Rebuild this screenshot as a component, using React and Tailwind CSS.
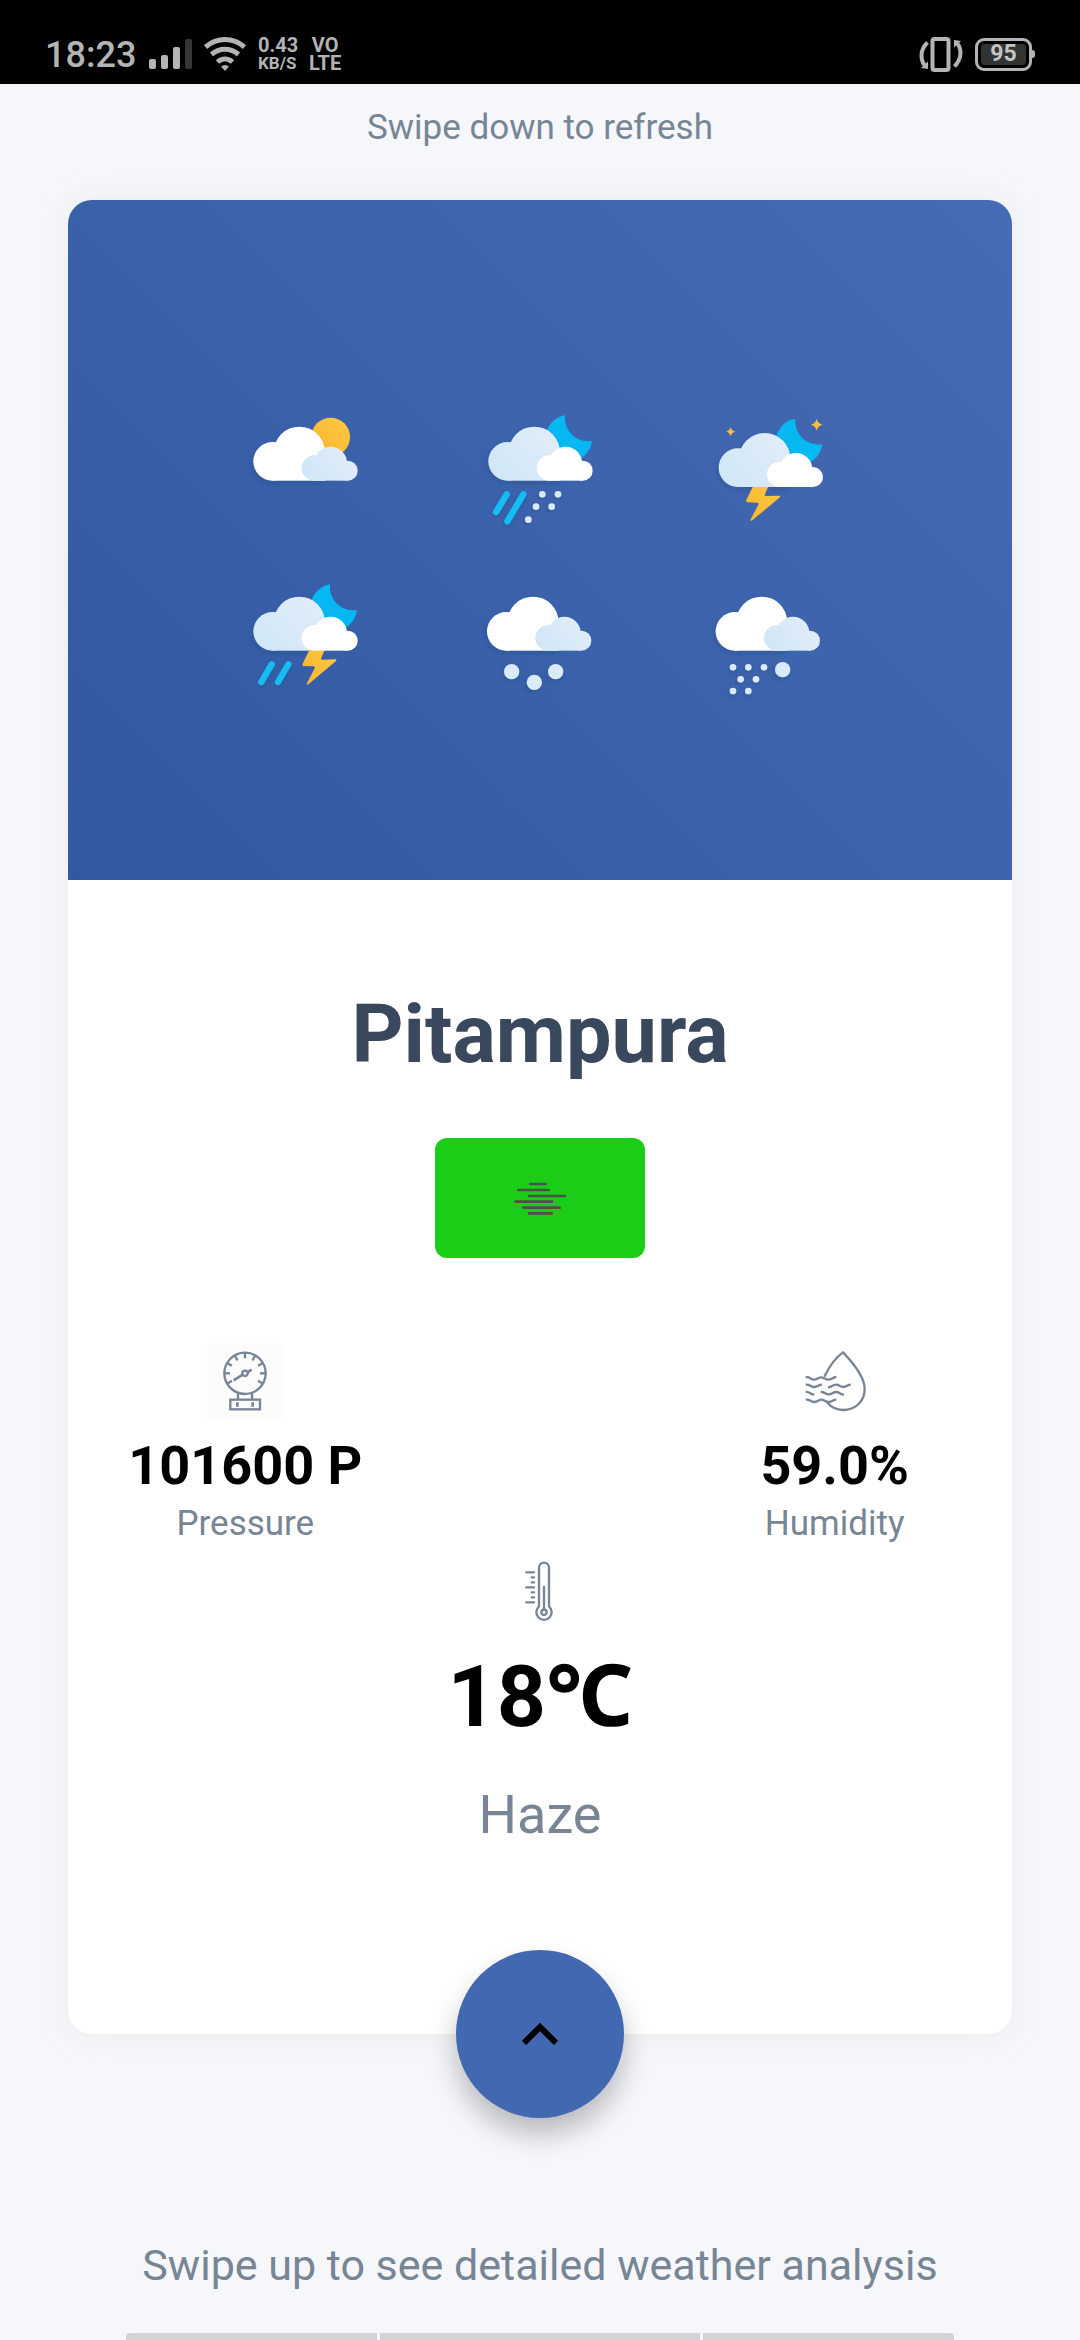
const INK = "#b4b4b4";

function SignalIcon() {
  return (
    <svg className="h-8 w-11" viewBox="0 0 44 32" aria-hidden="true">
      <rect x="0" y="21" width="7" height="10" rx="2" fill={INK} />
      <rect x="12" y="17" width="7" height="14" rx="2" fill={INK} />
      <rect x="24" y="9" width="7" height="22" rx="2" fill={INK} />
      <rect x="36" y="1" width="7" height="30" rx="2" fill="#363636" />
    </svg>
  );
}

function WifiIcon() {
  return (
    <svg className="h-[34px] w-[42px]" viewBox="0 0 42 34" fill="none" stroke={INK} strokeWidth="5" aria-hidden="true">
      <path d="M1.500 10C13 0 29 0 40.500 10" />
      <path d="M7.500 17.500C15.500 10.500 26.500 10.500 34.500 17.500" />
      <path d="M13.500 25C18 21 24 21 28.500 25" />
      <path d="M17 29.500Q21 26.500 25 29.500L21 34Z" fill={INK} stroke="none" />
    </svg>
  );
}

function VibrateIcon() {
  return (
    <svg className="h-9 w-11" viewBox="0 0 44 36" fill="none" stroke={INK} strokeWidth="4" aria-hidden="true">
      <rect x="13.500" y="3" width="16" height="31" rx="2" />
      <path d="M8.500 6.500C1 13.500 1 23.500 6 30" />
      <path d="M35.500 30.500C43 22.500 43 13.500 38 7" />
      <path d="M2 32L9 33V25.500Z" fill={INK} stroke="none" />
      <path d="M42 5L35 4V11.500Z" fill={INK} stroke="none" />
    </svg>
  );
}

function StatusBar() {
  return (
    <header className="flex h-[84px] items-end justify-between bg-black px-[45px] pb-3 text-[#b4b4b4]">
      <div className="flex items-center">
        <span className="h-9 w-[104px] text-[36px] leading-[38px] font-medium">18:23</span>
        <SignalIcon />
        <span className="ml-[11px] flex">
          <WifiIcon />
        </span>
        <div className="ml-3 flex w-[51px] flex-col font-bold">
          <span className="text-[20px] leading-[18px]">0.43</span>
          <span className="text-[17px] leading-[18px]">KB/S</span>
        </div>
        <div className="flex flex-col items-center text-[20px] leading-[18px] font-bold">
          <span>VO</span>
          <span>LTE</span>
        </div>
      </div>
      <div className="flex items-center gap-3">
        <VibrateIcon />
        <div className="flex items-center">
          <div className="flex h-[33px] w-[57px] rounded-[9px] border-[3px] border-[#b4b4b4] p-[3px]">
            <span className="flex flex-1 items-center justify-center rounded bg-[#333333] text-[23px] leading-[22px] font-bold text-[#c4c4c4]">
              95
            </span>
          </div>
          <span className="h-2 w-[3px] rounded-r bg-[#b4b4b4]" />
        </div>
      </div>
    </header>
  );
}

/* Cloud pair: origin is the lower left corner of the large cloud. */
function Clouds({ big, small }) {
  return (
    <>
      <g fill={big} filter="url(#soft)">
        <circle cx="58" cy="-58" r="58" />
        <circle cx="138" cy="-85" r="77" />
        <rect x="58" y="-90" width="157" height="90" />
      </g>
      <g fill={small}>
        <circle cx="183" cy="-38" r="38" />
        <circle cx="232" cy="-53" r="49" />
        <circle cx="283" cy="-30" r="30" />
        <rect x="183" y="-50" width="100" height="50" />
      </g>
    </>
  );
}

const Moon = ({ y = 0 }) => (
  <path transform={`translate(0 ${y})`} d="M230 -196A70 70 0 1 0 311 -119A70 70 0 0 1 230 -196Z" fill="#05b8f2" />
);

const Bolt = ({ x = 0 }) => (
  <path
    transform={`translate(${x} 0)`}
    d="M167 0H213L204 21Q201 28 208 27L246 26Q252 27 247 32L166 100Q159 105 161 97L184 53Q187 47 180 47L152 46Q146 46 148 39Z"
    fill="url(#amber)"
  />
);

const Rain = ({ lines }) =>
  lines.map(([x1, y1, x2, y2]) => (
    <path key={x1} d={`M${x1} ${y1}L${x2} ${y2}`} stroke="#14bdf3" strokeWidth="19" strokeLinecap="round" filter="url(#soft)" />
  ));

const Dots = ({ points, r }) =>
  points.map(([x, y]) => <circle key={`${x}-${y}`} cx={x} cy={y} r={r} fill="#d9eaf8" filter="url(#soft)" />);

const Star = ({ x, y, r }) => (
  <path
    transform={`translate(${x} ${y}) scale(${r})`}
    d="M0 -1Q.18 -.18 1 0Q.18 .18 0 1Q-.18 .18 -1 0Q-.18 -.18 0 -1Z"
    fill="#fdbf3b"
  />
);

function WeatherIllustration() {
  return (
    <svg className="block w-full rounded-t-[24px]" viewBox="0 0 2832 2040" role="img" aria-label="Weather conditions">
      <defs>
        <linearGradient id="sky" gradientUnits="userSpaceOnUse" x1="200" y1="2240" x2="2600" y2="-160">
          <stop offset="0" stopColor="#3159a0" />
          <stop offset="1" stopColor="#456bb5" />
        </linearGradient>
        <linearGradient id="paleBig" gradientUnits="userSpaceOnUse" x1="30" y1="0" x2="200" y2="-160">
          <stop offset="0" stopColor="#cfe7f7" />
          <stop offset="1" stopColor="#e2ecf9" />
        </linearGradient>
        <linearGradient id="paleSmall" gradientUnits="userSpaceOnUse" x1="160" y1="0" x2="290" y2="-100">
          <stop offset="0" stopColor="#cfe7f7" />
          <stop offset="1" stopColor="#e2ecf9" />
        </linearGradient>
        <linearGradient id="amber" x1="0" y1="1" x2="1" y2="0">
          <stop offset="0" stopColor="#fbb42c" />
          <stop offset="1" stopColor="#fec943" />
        </linearGradient>
        <filter id="soft" x="-30%" y="-30%" width="160%" height="160%">
          <feDropShadow dx="-4" dy="8" stdDeviation="6" floodColor="#1d3c7c" floodOpacity="0.3" />
        </filter>
      </defs>
      <rect width="2832" height="2040" fill="url(#sky)" />
      <g transform="translate(556 842)">
        <circle cx="232" cy="-131" r="58" fill="url(#amber)" />
        <Clouds big="#ffffff" small="url(#paleSmall)" />
      </g>
      <g transform="translate(1261 842)">
        <Moon />
        <Clouds big="url(#paleBig)" small="#ffffff" />
        <Rain lines={[[55, 41, 23, 94], [105, 41, 57, 122]]} />
        <Dots r={10} points={[[162, 41], [209, 41], [143, 78], [190, 78], [120, 117]]} />
      </g>
      <g transform="translate(1952 861)">
        <Moon y={-9} />
        <Clouds big="url(#paleBig)" small="#ffffff" />
        <Bolt x={-65} />
        <Star x={294} y={-187} r={18} />
        <Star x={36} y={-166} r={14} />
      </g>
      <g transform="translate(556 1352)">
        <Moon y={-3} />
        <Clouds big="url(#paleBig)" small="#ffffff" />
        <Rain lines={[[55, 41, 24, 94], [105, 41, 74, 94]]} />
        <Bolt />
      </g>
      <g transform="translate(1257 1352)">
        <Clouds big="#ffffff" small="url(#paleSmall)" />
        <Dots r={23} points={[[74, 63], [142, 95], [206, 63]]} />
      </g>
      <g transform="translate(1943 1352)">
        <Clouds big="#ffffff" small="url(#paleSmall)" />
        <Dots r={10} points={[[52, 50], [98, 50], [145, 50], [75, 86], [121, 86], [52, 121], [98, 121]]} />
        <Dots r={23} points={[[201, 57]]} />
      </g>
    </svg>
  );
}

function HazeIcon() {
  return (
    <svg className="h-9 w-[54px]" viewBox="0 0 162 108" stroke="#4c4f4c" strokeWidth="8" strokeLinecap="round" aria-hidden="true">
      <path d="M52 12H98M16 30H107M48 48H156M8 65H117M31 83H140M48 100H116" />
    </svg>
  );
}

function PressureIcon() {
  const ticks = [-120, -90, -60, -30, 0, 30, 60, 90, 120];
  return (
    <svg className="h-[76px] w-[76px] bg-[#fcfcfc]" viewBox="0 0 228 228" fill="none" stroke="#778595" strokeWidth="7" aria-hidden="true">
      <circle cx="114" cy="91" r="62" />
      {ticks.map((a) => (
        <path key={a} d="M114 30V46" transform={`rotate(${a} 114 91)`} />
      ))}
      <circle cx="114" cy="91" r="8" />
      <path d="M107 95L80 112M121 88L134 80" strokeWidth="8" />
      <path d="M93 151V168M135 151V168" />
      <rect x="70" y="170" width="89" height="29" />
      <path d="M91 178V191M137 178V191" strokeWidth="8" />
    </svg>
  );
}

function HumidityIcon() {
  return (
    <svg className="h-[76px] w-[76px]" viewBox="0 0 228 228" fill="none" stroke="#778595" strokeWidth="7" aria-hidden="true">
      <path d="M82 101C94 76 115 44 138 28C166 57 203 100 203 138C203 176 174 201 138 201C119 201 101 191 90 178" />
      <path d="M26 103C40 100 40 111 52 110C64 109 64 102 73 103C83 104 84 111 96 110C107 109 108 102 118 102" />
      <path d="M26 125C39 123 40 133 52 132C63 131 64 125 75 125" />
      <path d="M93 133C104 133 106 125 117 125C127 125 128 132 139 132C150 132 151 125 161 125" />
      <path d="M26 147C39 145 40 155 52 155" />
      <path d="M71 147C84 146 85 155 96 154C106 153 107 147 118 147C128 147 129 155 141 155" />
      <path d="M26 170C40 168 40 178 52 177C64 176 64 170 73 170C83 170 84 178 96 177C107 176 108 170 118 170" />
    </svg>
  );
}

function ThermometerIcon() {
  return (
    <svg className="h-[60px] w-[60px]" viewBox="-10 0 180 180" fill="none" stroke="#778595" strokeWidth="7" strokeLinecap="round" aria-hidden="true">
      <path d="M77 136V20A15 15 0 0 1 107 20V136A23 23 0 1 1 77 136Z" />
      <circle cx="92" cy="154" r="8" />
      <path d="M92 78V145" />
      <path d="M39 34H62M55 49H62M55 64H62M39 79H62M55 94H62M55 109H62M39 124H62" />
    </svg>
  );
}

function Metric({ icon, value, label }) {
  return (
    <div className="flex flex-col items-center">
      {icon}
      <p className="mt-[15px] text-[54px] leading-[64px] font-bold whitespace-nowrap text-black">{value}</p>
      <p className="mt-1 text-[35px] leading-[44px]">{label}</p>
    </div>
  );
}

export default function App() {
  return (
    <div className="min-h-screen bg-[#f5f7fb] font-['Roboto','Noto_Sans',sans-serif] text-[#778595]">
      <StatusBar />
      <main className="flex flex-col items-stretch">
        <p className="mt-[22px] text-center text-[35px] leading-[44px]">Swipe down to refresh</p>

        <section className="mx-[68px] mt-[50px] flex flex-col items-center rounded-[24px] bg-white shadow-[0_0_24px_rgba(225,225,215,0.5)]">
          <WeatherIllustration />
          <h1 className="mt-[107px] text-[81px] leading-[96px] font-bold text-[#3a485e]">Pitampura</h1>
          <div className="mt-[55px] flex h-[120px] w-[210px] items-center justify-center rounded-xl bg-[#1ace18]">
            <HazeIcon />
          </div>
          <div className="mt-[85px] grid w-full grid-cols-3 px-[30px]">
            <Metric icon={<PressureIcon />} value="101600 P" label="Pressure" />
            <div className="col-start-3">
              <Metric icon={<HumidityIcon />} value="59.0%" label="Humidity" />
            </div>
          </div>
          <div className="mt-[15px] flex flex-col items-center">
            <ThermometerIcon />
            <p className="mt-6 text-[86px] leading-[104px] font-bold text-black">18℃</p>
            <p className="mt-[34px] text-[54px] leading-[64px]">Haze</p>
          </div>
          <button
            type="button"
            aria-label="Show detailed analysis"
            className="mt-[103px] -mb-[84px] flex h-[168px] w-[168px] items-center justify-center rounded-full bg-[#4368b2] shadow-[0_16px_28px_rgba(0,0,0,0.25)]"
          >
            <svg className="h-6 w-9" viewBox="0 0 36 24" fill="none" stroke="#000000" strokeWidth="6" aria-hidden="true">
              <path d="M2 21L18 5L34 21" />
            </svg>
          </button>
        </section>

        <p className="mt-[205px] text-center text-[43px] leading-[52px]">Swipe up to see detailed weather analysis</p>
        <div className="mx-[126px] mt-[42px] flex h-[7px] gap-[3px] overflow-hidden rounded-t">
          <span className="w-[251px] bg-[#d1d3d5]" />
          <span className="flex-1 bg-[#d1d3d5]" />
          <span className="w-[251px] bg-[#d1d3d5]" />
        </div>
      </main>
    </div>
  );
}
